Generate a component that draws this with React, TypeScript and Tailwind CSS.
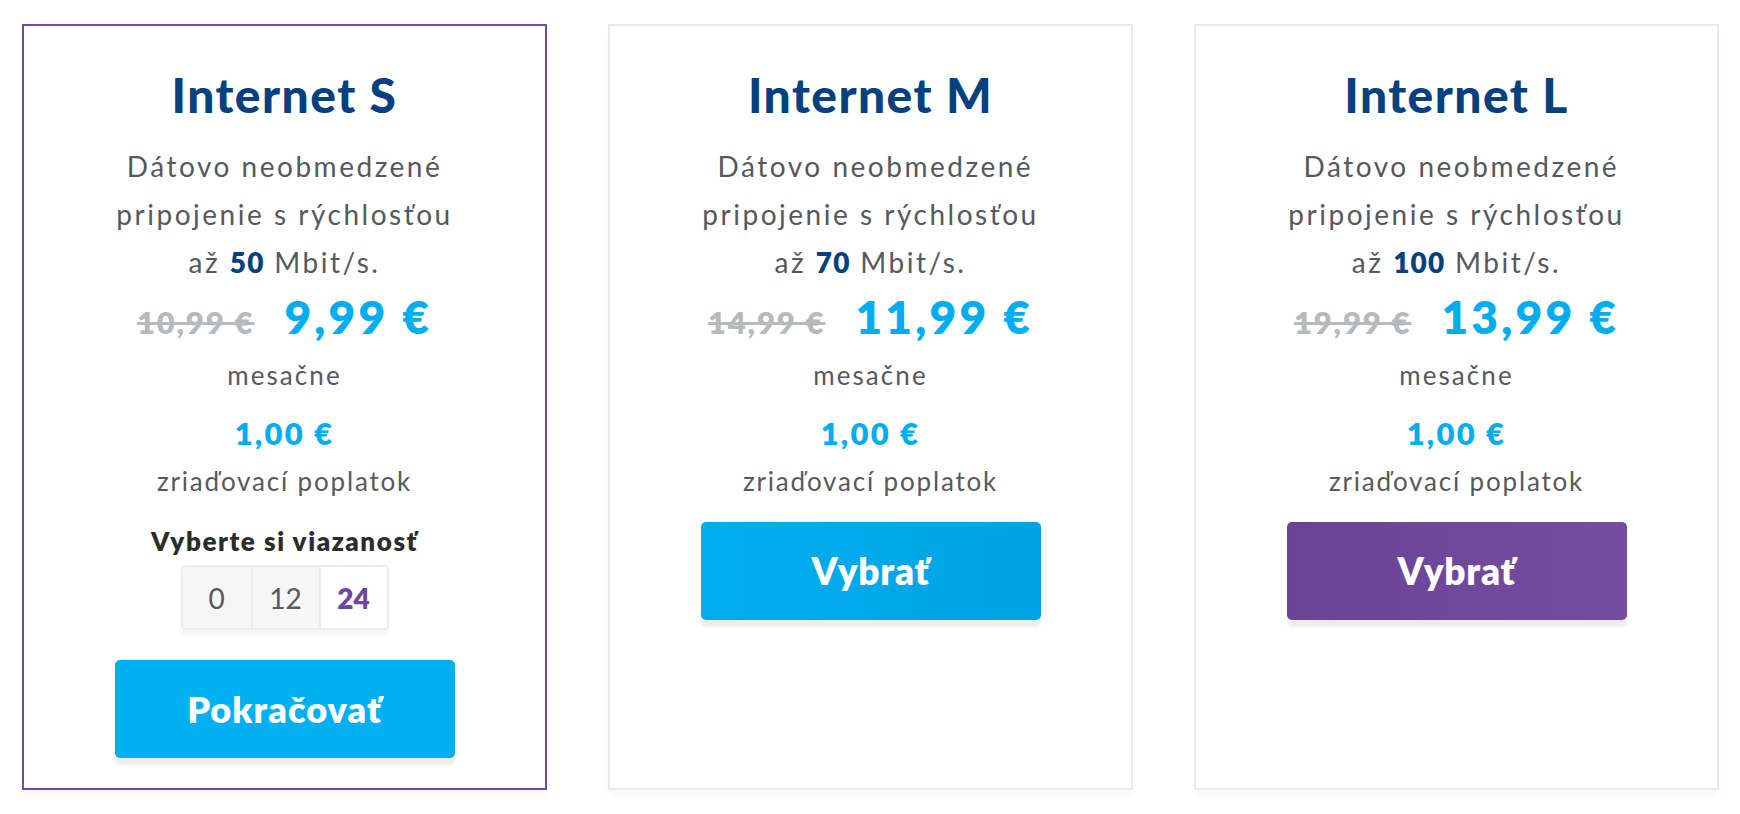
import React, { useState } from 'react';

type Plan = {
  name: string;
  speed: string;
  oldPrice: string;
  price: string;
  lead: boolean;
  action: 'select' | 'blue' | 'purple';
};

const plans: Plan[] = [
  { name: 'Internet S', speed: '50', oldPrice: '10,99 €', price: '9,99 €', lead: false, action: 'select' },
  { name: 'Internet M', speed: '70', oldPrice: '14,99 €', price: '11,99 €', lead: true, action: 'blue' },
  { name: 'Internet L', speed: '100', oldPrice: '19,99 €', price: '13,99 €', lead: true, action: 'purple' },
];

const terms = ['0', '12', '24'];

const PlanCard: React.FC<{ plan: Plan }> = ({ plan }) => {
  const [term, setTerm] = useState('24');
  const active = plan.action === 'select';

  return (
    <div
      className={`flex flex-col items-center bg-white border-2 pt-[43px] pb-[30px] text-center shadow-[0_8px_6px_rgba(0,0,0,0.025)] ${
        active ? 'border-[#6f4aa0]' : 'border-[#e9e9ea]'
      }`}
    >
      {/* Title */}
      <h2 className="text-[48px] leading-[52px] font-black text-[#05407f] tracking-[0.03em]">{plan.name}</h2>

      {/* Description */}
      <p className="mt-[21px] text-[28px] leading-[48px] text-[#55595d] tracking-[0.09em]">
        {plan.lead ? '\u00a0' : ''}Dátovo neobmedzené
        <br />
        pripojenie s rýchlosťou
        <br />
        až <span className="font-extrabold text-[#05407f] tracking-[0.04em]">{plan.speed}</span> Mbit/s.
      </p>

      {/* Price */}
      <div className="mt-[4px] flex items-baseline gap-[30px] leading-[54px]">
        <span className="text-[31px] font-extrabold text-[#b7babd] line-through decoration-[3px] tracking-[0.06em]">
          {plan.oldPrice}
        </span>
        <span className="text-[46px] font-extrabold text-[#00aeef] tracking-[0.07em]">{plan.price}</span>
      </div>
      <div className="mt-[8px] text-[26px] leading-[36px] text-[#57595c] tracking-[0.08em]">mesačne</div>

      <div className="mt-[20px] text-[31px] leading-[40px] font-extrabold text-[#00aeef] tracking-[0.07em]">1,00 €</div>
      <div className="mt-[10px] text-[26px] leading-[36px] text-[#57595c] tracking-[0.07em]">zriaďovací poplatok</div>

      {active ? (
        <>
          <div className="mt-[25px] text-[26px] leading-[34px] font-extrabold text-[#2c2c2c] tracking-[0.06em]">
            Vyberte si viazanosť
          </div>
          <div className="mt-[7px] flex h-[65px] rounded-[5px] border-2 border-[#ececec] overflow-hidden shadow-[0_6px_5px_rgba(0,0,0,0.04)]">
            {terms.map((t, i) => (
              <button
                key={t}
                onClick={() => setTerm(t)}
                className={`w-[68px] text-[28px] ${i > 0 ? 'border-l-2 border-[#ececec]' : ''} ${
                  term === t ? 'bg-white font-extrabold text-[#6f45a0]' : 'bg-[#f6f6f6] text-[#57595c]'
                }`}
              >
                {t}
              </button>
            ))}
          </div>
          <button className="mt-[30px] w-[340px] h-[98px] rounded-[5px] bg-[#00b0f0] text-white text-[36px] font-extrabold tracking-[0.03em] shadow-[0_7px_3px_rgba(0,0,0,0.07)]">
            Pokračovať
          </button>
        </>
      ) : (
        <button
          className={`mt-[23px] w-[340px] h-[98px] rounded-[5px] text-white text-[37px] font-extrabold tracking-[0.02em] bg-linear-to-r shadow-[0_7px_3px_rgba(0,0,0,0.07)] ${
            plan.action === 'blue' ? 'from-[#00aeef] to-[#00a3e3]' : 'from-[#6a4395] to-[#744da0]'
          }`}
        >
          Vybrať
        </button>
      )}
    </div>
  );
};

export default function App() {
  return (
    <div className="min-h-screen bg-white font-['Lato',sans-serif] pt-[24px] pl-[22px]">
      <div className="grid grid-cols-[repeat(3,525px)] gap-x-[61px] items-stretch">
        {plans.map(p => (
          <PlanCard key={p.name} plan={p} />
        ))}
      </div>
    </div>
  );
}
